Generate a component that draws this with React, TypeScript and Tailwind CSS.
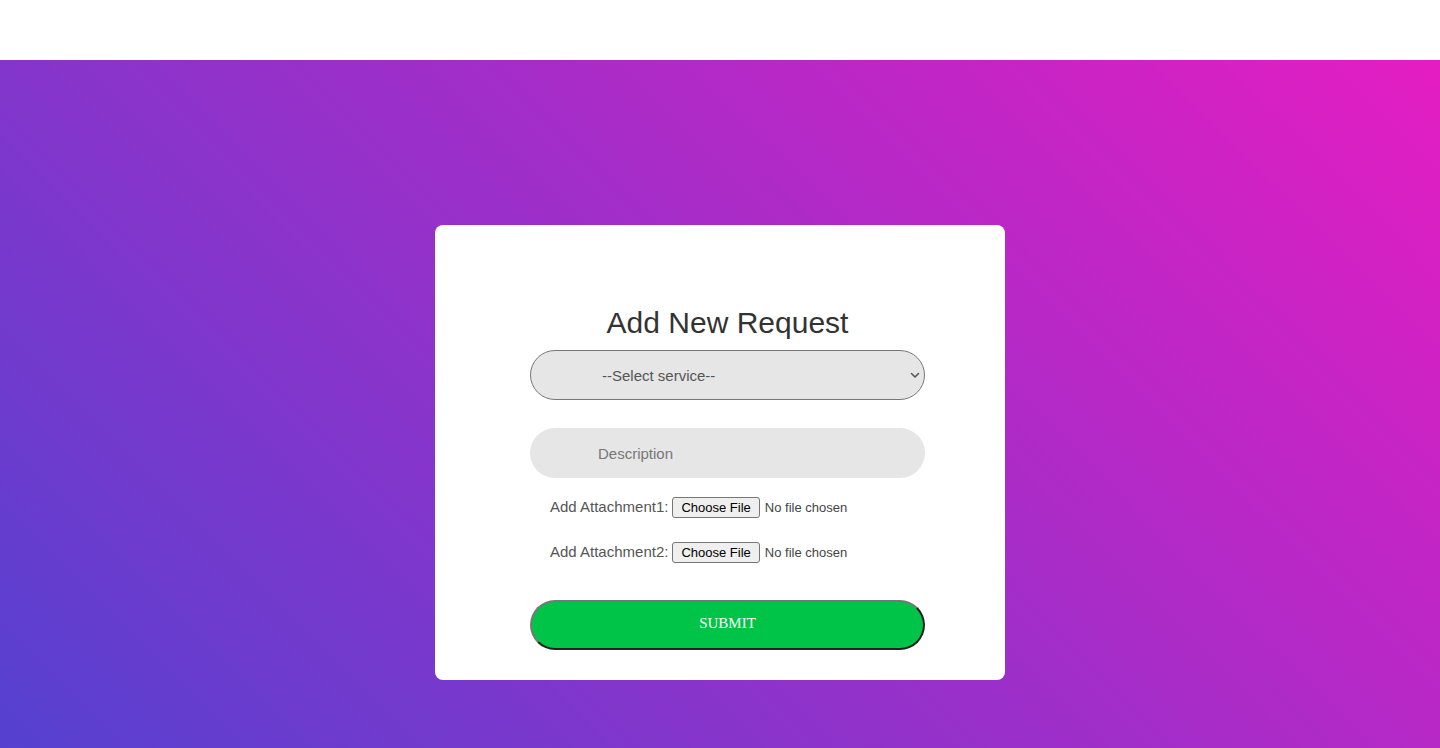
import React from "react";

function FileRow({ label }: { label: string }) {
  return (
    <div className="flex items-center h-[21px] pl-[20px]">
      <span className="text-[15px] text-[#555] mr-[4px]" style={{ fontFamily: '"Liberation Sans", Arial, sans-serif' }}>
        {label}
      </span>
      <span className="inline-flex items-center h-[21px] px-[8px] border border-[#767676] rounded-[3px] bg-[#efefef] text-[13px] text-black leading-none">
        Choose File
      </span>
      <span className="ml-[5px] text-[13px] text-[#444]">No file chosen</span>
    </div>
  );
}

export default function App() {
  return (
    <div className="w-full min-h-[748px] bg-white" style={{ fontFamily: '"Liberation Sans", Arial, sans-serif' }}>
      <div className="h-[60px] bg-white" />
      <div className="h-[688px] bg-[linear-gradient(45deg,#5541d0,#e41dc2)] flex justify-center pt-[165px]">
        <div className="w-[570px] h-[455px] bg-white rounded-[8px] flex flex-col items-center pt-[81px] pl-[15px]">
          <h2 className="text-[30px] leading-[34px] text-[#333] text-center">Add New Request</h2>
          <div className="relative mt-[10px] w-[395px] h-[50px]">
            <select className="appearance-none w-full h-full rounded-full bg-[#e6e6e6] border border-[#777] pl-[71px] pt-[2px] text-[15px] text-[#555] outline-none" defaultValue="">
              <option value="">--Select service--</option>
            </select>
            <svg className="absolute right-[5px] top-[22px] w-[10px] h-[7px]" viewBox="0 0 10 7" fill="none">
              <path d="M1.5 1.5 L5 5 L8.5 1.5" stroke="#555" strokeWidth="1.6" strokeLinecap="round" strokeLinejoin="round" />
            </svg>
          </div>
          <input
            placeholder="Description"
            className="mt-[28px] w-[395px] h-[50px] rounded-full bg-[#e6e6e6] pl-[68px] text-[15px] text-[#555] placeholder:text-[#777] outline-none"
          />
          <div className="w-[395px] mt-[19px] flex flex-col gap-[24px]">
            <FileRow label="Add Attachment1:" />
            <FileRow label="Add Attachment2:" />
          </div>
          <button
            className="mt-[37px] w-[395px] h-[50px] rounded-full bg-[#00c447] text-white text-[15px] pb-[4px] border-2 border-t-[#777] border-l-[#777] border-r-[#222] border-b-[#222]"
            style={{ fontFamily: '"Liberation Serif", "Times New Roman", serif' }}
          >
            SUBMIT
          </button>
        </div>
      </div>
    </div>
  );
}
